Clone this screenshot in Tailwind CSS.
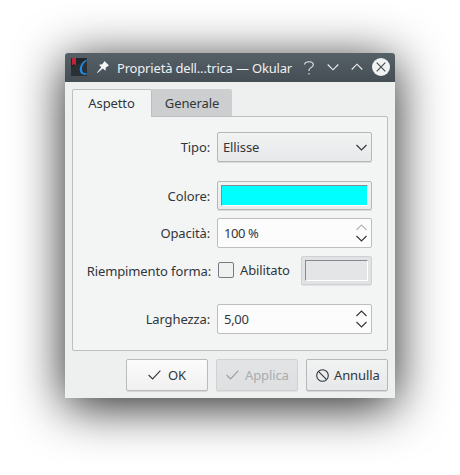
<!DOCTYPE html>
<html lang="it">
<head>
<meta charset="utf-8">
<title>Proprietà – Okular</title>
<script src="https://cdn.jsdelivr.net/npm/@tailwindcss/browser@4"></script>
</head>
<body class="h-[475px] overflow-hidden bg-white pl-[65px] pt-[53px] font-['Noto_Sans',sans-serif] text-[13px] leading-[18px] tracking-[-0.12px] text-[#31363b]">
<div class="flex h-[345px] w-[330px] flex-col rounded-t-[3px] bg-[#eef0f0] shadow-[0_8px_50px_rgba(0,0,0,0.88)]">
  <header class="flex h-[29px] shrink-0 items-center rounded-t-[3px] bg-linear-to-b from-[#566067] to-[#454e55] pl-[6px] text-[#eff0f1]">
    <svg class="-mt-px h-[18px] w-4 shrink-0" viewBox="0 0 16 18">
      <rect width="16" height="18" rx="1" fill="#20262b"/>
      <path d="M0 10L16 1v16a1 1 0 0 1-1 1H1a1 1 0 0 1-1-1z" fill="#2b3034"/>
      <path d="M1 0h4v7.500L3 6 1 7.500z" fill="#c52438"/>
      <path d="M15.700 1.500C11 3.500 8.300 8.500 8.800 12.500c.4 3.500 3.700 4.600 6.700 4.200l.2-1.500c-2.500.3-4.500-.8-4.700-3.500C10.800 8 12.500 4.500 15.700 2.700z" fill="#218be0"/>
    </svg>
    <svg class="ml-[10px] -mt-[2px] h-3 w-3 shrink-0" viewBox="0 0 12 12" fill="#f4f5f5"><path d="M7.500 0L12 4.500 10.700 5.200 8.800 6.600 8.500 9.800 5.800 7.500.5 12 0 11.500 4.300 6.200 2 3.700 5.200 3.300 6.800 1.200z"/></svg>
    <h1 class="ml-[8px] w-[176px] shrink-0 whitespace-nowrap tracking-[-0.18px]">Proprietà dell...trica — Okular</h1>
    <svg class="ml-[10px] h-[14px] w-[12px] shrink-0" viewBox="0 0 12 14" fill="none" stroke="#e8eaeb" stroke-width="1.100"><path d="M1.500 3.500C2 1.500 4 .8 6 .8c2.500 0 4.300 1 4.300 3 0 2.800-4.300 2.800-4.300 5.200v1M6 12v1.500"/></svg>
    <svg class="ml-[12px] -mt-px h-[8px] w-[12px] shrink-0" viewBox="0 0 12 8" fill="none" stroke="#eff0f1" stroke-width="1.100"><path d="M.7 1.500L6 6.800l5.300-5.300"/></svg>
    <svg class="ml-[12px] -mt-[2px] h-[8px] w-[12px] shrink-0" viewBox="0 0 12 8" fill="none" stroke="#eff0f1" stroke-width="1.100"><path d="M.7 6.500L6 1.200l5.300 5.300"/></svg>
    <svg class="ml-[9px] -mt-px h-[18px] w-[18px] shrink-0" viewBox="0 0 18 18"><circle cx="9" cy="9" r="9" fill="#f1f2f2"/><path d="M4.700 4.700l8.600 8.600m0-8.600l-8.600 8.600" stroke="#454e55" stroke-width="1.200"/></svg>
  </header>

  <nav class="z-10 mt-[7px] ml-[7px] flex h-[28px] shrink-0 items-start">
    <div class="h-[28px] w-[80px] rounded-t-[2px] border border-b-0 border-[#bcbebf] bg-[#f3f5f4] pt-[4px] pr-px text-center">Aspetto</div>
    <div class="h-[27px] w-[80px] rounded-tr-[2px] bg-[#cccecf] pt-[5px] text-center">Generale</div>
  </nav>
  <main class="-mt-px ml-[7px] flex h-[235px] w-[316px] shrink-0 flex-col rounded-b-[2px] rounded-tr-[2px] border border-[#bcbebf] bg-[#f3f5f4] pt-[15px] pr-[15px]">
    <div class="flex h-[30px] items-center">
      <span class="w-[137px] text-right">Tipo:</span>
      <div class="ml-[7px] flex h-[30px] w-[155px] items-center justify-between rounded-[2px] border border-[#b5b7b9] bg-linear-to-b from-[#f1f2f2] to-[#e7e8e9] pr-[4px] pl-[5px] shadow-[0_1px_0_#d9dadb]">
        <span>Ellisse</span>
        <svg class="h-[7px] w-[11px]" viewBox="0 0 11 7" fill="none" stroke="#31363b" stroke-width="1.100"><path d="M.5 1l5 5 5-5"/></svg>
      </div>
    </div>
    <div class="mt-[19px] flex h-[29px] items-center">
      <span class="w-[137px] text-right">Colore:</span>
      <div class="ml-[7px] h-[29px] w-[155px] rounded-[2px] border border-[#b5b7b9] bg-linear-to-b from-[#f1f2f2] to-[#e9eaeb] p-[3px] shadow-[0_1px_0_#d9dadb]">
        <div class="h-[21px] w-[147px] border border-t-[#858b91] border-r-white border-b-white border-l-[#858b91] bg-[#00ffff]"></div>
      </div>
    </div>
    <div class="mt-[8px] flex h-[30px] items-center">
      <span class="w-[137px] text-right">Opacità:</span>
      <div class="ml-[7px] flex h-[30px] w-[155px] items-center justify-between rounded-[2px] border border-[#bcbebf] bg-[#fcfcfc] pr-[4px] pl-[6px]">
        <span class="tracking-[-0.4px]">100 %</span>
        <svg class="h-[18px] w-[11px]" viewBox="0 0 11 18" fill="none" stroke-width="1.100"><path d="M.5 6l5-5 5 5" stroke="#b4b6b8"/><path d="M.5 12l5 5 5-5" stroke="#31363b"/></svg>
      </div>
    </div>
    <div class="mt-[8px] flex h-[29px] items-center">
      <span class="w-[138px] whitespace-nowrap pt-px text-right">Riempimento forma:</span>
      <span class="ml-[7px] -mt-px h-4 w-4 rounded-[2px] border border-[#777b7f] bg-[#eff1f0]"></span>
      <span class="ml-[6px] -mt-px w-[61px]">Abilitato</span>
      <div class="h-[29px] w-[71px] rounded-[2px] border border-[#cfd1d2] bg-[#e0e2e3] p-[3px] shadow-[0_1px_0_#e2e4e4]">
        <div class="h-[21px] w-[63px] border border-t-[#858991] border-r-white border-b-white border-l-[#858991] bg-[#e3e5e7]"></div>
      </div>
    </div>
    <div class="mt-[19px] flex h-[30px] items-center">
      <span class="w-[137px] text-right">Larghezza:</span>
      <div class="ml-[7px] flex h-[30px] w-[155px] items-center justify-between rounded-[2px] border border-[#bcbebf] bg-[#fcfcfc] pr-[4px] pl-[6px]">
        <span class="tracking-[-0.3px]">5,00</span>
        <svg class="h-[18px] w-[11px]" viewBox="0 0 11 18" fill="none" stroke="#31363b" stroke-width="1.100"><path d="M.5 6l5-5 5 5M.5 12l5 5 5-5"/></svg>
      </div>
    </div>
  </main>

  <footer class="mt-[8px] mr-[7px] flex justify-end gap-[8px]">
    <button class="flex h-[32px] w-[82px] items-center rounded-[2px] border border-[#b9bbbd] bg-linear-to-b from-[#fcfcfc] to-[#f0f0f0] pl-[21px] shadow-[0_1px_0_#d5d7d8]">
      <svg class="mr-[7px] h-[10px] w-[13px]" viewBox="0 0 13 10" fill="none" stroke="#31363b" stroke-width="1.100"><path d="M.6 5l4 4L12.400.7"/></svg>OK
    </button>
    <button class="flex h-[32px] w-[82px] items-center rounded-[2px] border border-[#cfd1d2] bg-linear-to-b from-[#e2e4e5] to-[#dddfe0] pl-[9px] text-[#aaacae] shadow-[0_1px_0_#dddfe0]">
      <svg class="mr-[6px] h-[10px] w-[13px]" viewBox="0 0 13 10" fill="none" stroke="#999c9e" stroke-width="1.100"><path d="M.6 5l4 4L12.400.7"/></svg>Applica
    </button>
    <button class="flex h-[32px] w-[82px] items-center rounded-[2px] border border-[#b5b7b9] bg-linear-to-b from-[#f1f2f2] to-[#e7e8e9] pl-[9px] shadow-[0_1px_0_#d5d7d8]">
      <svg class="mr-[5px] h-[13px] w-[13px]" viewBox="0 0 13 13" fill="none" stroke="#31363b" stroke-width="1.100"><circle cx="6.500" cy="6.500" r="5.800"/><path d="M2.400 2.400l8.200 8.200"/></svg>Annulla
    </button>
  </footer>
</div>
</body>
</html>
